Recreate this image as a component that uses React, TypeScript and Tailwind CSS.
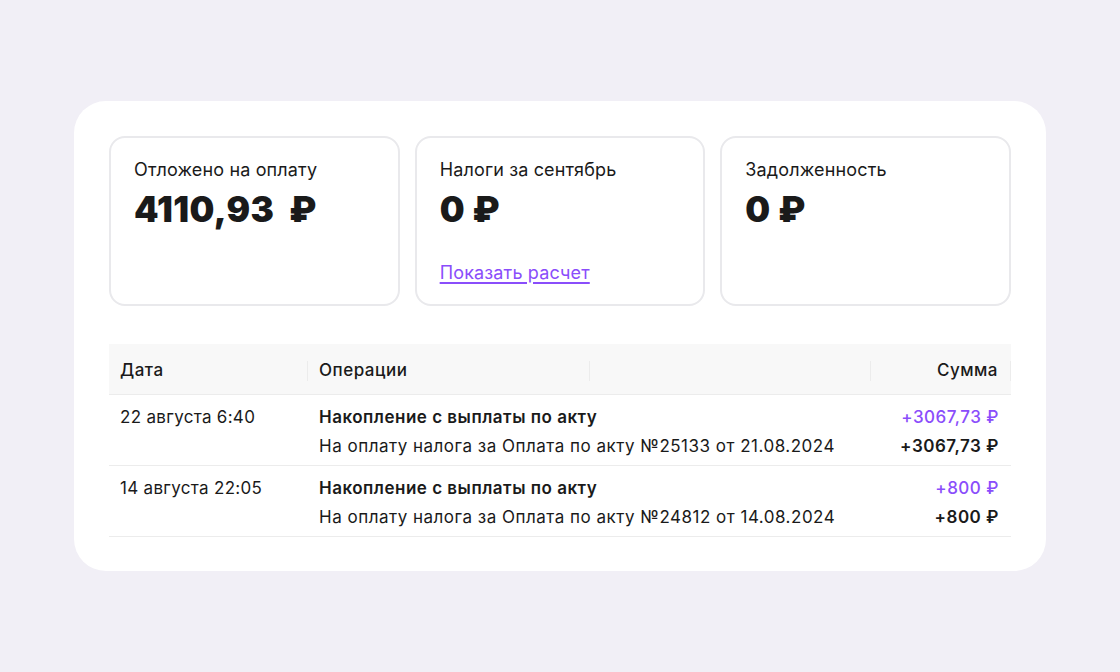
import React from "react";

const cards = [
  { label: "Отложено на оплату", amount: "4110,93\u00a0\u00a0₽", link: "" },
  { label: "Налоги за сентябрь", amount: "0 ₽", link: "Показать расчет" },
  { label: "Задолженность", amount: "0 ₽", link: "" },
];

const rows = [
  {
    date: "22 августа 6:40",
    title: "Накопление с выплаты по акту",
    desc: "На оплату налога за Оплата по акту №25133 от 21.08.2024",
    sum: "+3067,73 ₽",
  },
  {
    date: "14 августа 22:05",
    title: "Накопление с выплаты по акту",
    desc: "На оплату налога за Оплата по акту №24812 от 14.08.2024",
    sum: "+800 ₽",
  },
];

export default function App() {
  return (
    <div
      className="w-[1120px] h-[672px] bg-[#f1eff6] flex items-center justify-center text-[#1a1a1a]"
      style={{ fontFamily: "Inter, 'Noto Sans', sans-serif" }}
    >
      <div className="w-[972px] h-[470px] bg-white rounded-[32px] px-[35px] pt-[35px]">
        {/* Summary cards */}
        <div className="grid grid-cols-3 gap-[15px]">
          {cards.map((c) => (
            <div
              key={c.label}
              className="h-[170px] rounded-[16px] border-2 border-[#e9e9ec] px-[23px] pt-[20px] flex flex-col"
            >
              <div className="text-[18px] leading-[24px] tracking-[0.15px]">{c.label}</div>
              <div className="text-[35px] leading-[40px] font-black mt-[7px] tracking-[0.4px]">
                {c.amount}
              </div>
              {c.link && (
                <a className="mt-auto mb-[19px] text-[18px] leading-[24px] tracking-[0.15px] text-[#8a4dfb] underline underline-offset-[3px] decoration-[1.5px] cursor-pointer">
                  {c.link}
                </a>
              )}
            </div>
          ))}
        </div>

        {/* Table */}
        <div className="mt-[38px] text-[17px] tracking-[0.5px]">
          <div className="h-[51px] bg-[#f8f8f8] border-b border-[#ececec] flex items-center pt-[3px]">
            <div className="w-[199px] pl-[11px] border-r border-[#ececec] h-[20px] flex items-center font-medium">Дата</div>
            <div className="w-[282px] pl-[11px] border-r border-[#ececec] h-[20px] flex items-center font-medium">Операции</div>
            <div className="w-[281px] border-r border-[#ececec] h-[20px]" />
            <div className="flex-1 pr-[12px] text-right border-r border-[#ececec] h-[20px] flex items-center justify-end font-medium">
              Сумма
            </div>
          </div>
          {rows.map((r) => (
            <div key={r.date} className="h-[71px] border-b border-[#ececec] flex pt-[10px]">
              <div className="w-[199px] pl-[11px] leading-[24px] tracking-[0.3px]">{r.date}</div>
              <div className="flex-1 pl-[11px]">
                <div className="font-semibold leading-[24px]">{r.title}</div>
                <div className="leading-[24px] mt-[5px]">{r.desc}</div>
              </div>
              <div className="pr-[12px] text-right">
                <div className="leading-[24px] font-medium text-[#8a4dfb]">{r.sum}</div>
                <div className="leading-[24px] mt-[5px] font-semibold">{r.sum}</div>
              </div>
            </div>
          ))}
        </div>
      </div>
    </div>
  );
}
